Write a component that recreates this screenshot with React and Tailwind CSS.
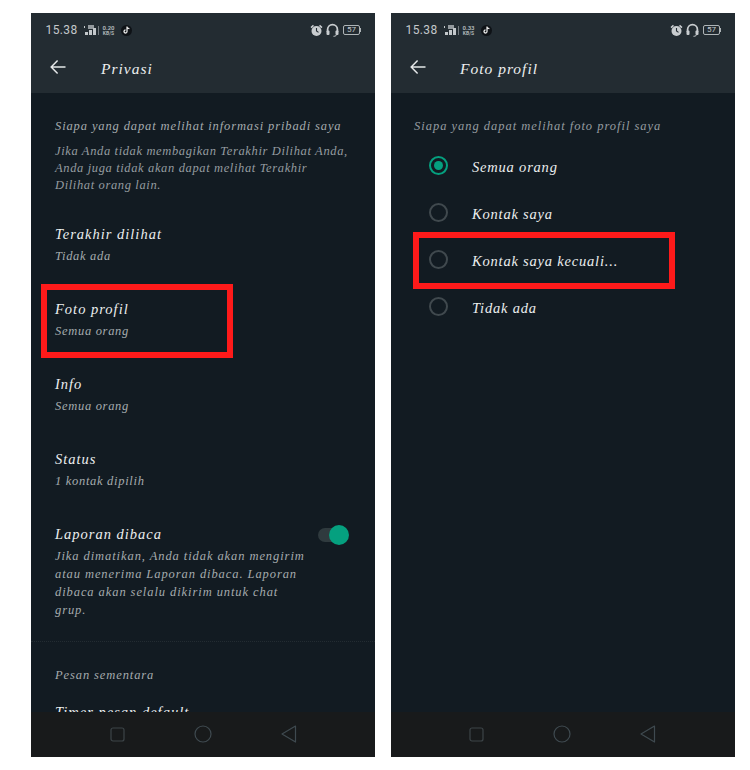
const font = { fontFamily: '"Liberation Serif", serif' };

function StatusBar({ speed }) {
  return (
    <div className="h-[34px] pl-[14px] pr-[14px] flex items-center justify-between">
      <div className="flex items-center">
        <span className="text-[12px] leading-none text-[#c3c8cb] tracking-[0.4px] w-[33px] ml-[0.5px]" style={{ fontFamily: 'Roboto, sans-serif' }}>15.38</span>
        <div className="ml-[5px] flex flex-col items-start w-[15px]">
          <svg width="16" height="12" viewBox="0 0 16 12" fill="#c3c8cb">
            <rect x="0" y="2" width="1" height="2" />
            <rect x="4" y="1" width="6" height="4" opacity="0.7" />
            <rect x="1" y="8" width="3" height="3" />
            <rect x="5" y="6" width="3" height="5" />
            <rect x="9" y="4" width="3" height="7" />
            <rect x="14" y="2" width="1" height="9" opacity="0.5" />
          </svg>
        </div>
        <div className="ml-[3px] flex flex-col items-center text-[6px] leading-[6px] text-[#aeb4b7] font-bold w-[14px]" style={{ fontFamily: 'Roboto, sans-serif' }}>
          <span>{speed}</span>
          <span className="text-[5px] leading-[5px]">KB/S</span>
        </div>
        <div className="ml-[5px] w-[11px] h-[11px] rounded-full bg-[#0e1216] flex items-center justify-center">
          <svg width="7" height="8" viewBox="0 0 7 8" fill="none" stroke="#e8e8e8" strokeWidth="1.3">
            <path d="M4 0.5 V5.5 A1.5 1.5 0 1 1 2.5 4 M4 1 C4.4 2 5.2 2.6 6.4 2.7" />
          </svg>
        </div>
      </div>
      <div className="flex items-center gap-[3px]">
        <svg width="13" height="13" viewBox="0 0 13 13" fill="#c8cccf">
          <circle cx="6.5" cy="7" r="5" />
          <path d="M0.5 3 L3 0.8 L4 2 L1.6 4.2 Z M12.5 3 L10 0.8 L9 2 L11.4 4.2 Z" />
          <path d="M6.5 4 V7 L8.5 8.4" stroke="#232c32" strokeWidth="1.1" fill="none" />
        </svg>
        <svg width="13" height="14" viewBox="0 0 13 14" fill="none" stroke="#c8cccf" strokeWidth="1.8">
          <path d="M1.6 9 V6.5 A4.9 4.9 0 0 1 11.4 6.5 V9" />
          <rect x="0.5" y="7.5" width="3" height="4.5" rx="1" fill="#c8cccf" stroke="none" />
          <rect x="9.5" y="7.5" width="3" height="4.5" rx="1" fill="#c8cccf" stroke="none" />
          <path d="M10.5 12 C10 13 8.5 13.3 7.5 13.3" strokeWidth="1" />
        </svg>
        <div className="flex items-center ml-[1px]">
          <div className="w-[17px] h-[10px] border border-[#aeb4b7] rounded-[2px] flex items-center justify-center text-[8px] leading-none text-[#c3c8cb]" style={{ fontFamily: 'Roboto, sans-serif' }}>57</div>
          <div className="w-[1px] h-[4px] bg-[#aeb4b7]" />
        </div>
      </div>
    </div>
  );
}

function Header({ title, titleX }) {
  return (
    <div className="bg-[#232c32] h-[80px] shrink-0 flex flex-col">
      <StatusBar speed={title === 'Privasi' ? '0.20' : '0.33'} />
      <div className="flex items-center h-[38px] pl-[19px]">
        <svg className="mt-[2px]" width="16" height="16" viewBox="0 0 16 16" fill="none" stroke="#e4e7e8" strokeWidth="1.5">
          <path d="M15.5 8 H1.2 M7.6 1.5 L1.2 8 L7.6 14.5" />
        </svg>
        <span className={`mt-[6px] text-[15.5px] leading-[20px] italic text-[#eceeef] tracking-[1px] ${titleX}`} style={font}>{title}</span>
      </div>
    </div>
  );
}

function NavBar({ pad }) {
  return (
    <div className={`absolute bottom-0 left-0 right-0 h-[45px] bg-[#181a1b] flex items-center gap-[69px] pb-[1px] ${pad}`}>
      <svg width="15" height="15" viewBox="0 0 15 15" fill="none" stroke="#3c4448" strokeWidth="1.2"><rect x="1" y="1" width="13" height="13" rx="2" /></svg>
      <svg width="18" height="18" viewBox="0 0 18 18" fill="none" stroke="#3f4a50" strokeWidth="1.2"><circle cx="9" cy="9" r="8" /></svg>
      <svg width="16" height="18" viewBox="0 0 16 18" fill="none" stroke="#3f4a50" strokeWidth="1.2"><path d="M14.5 1 L1 9 L14.5 17 Z" strokeLinejoin="round" /></svg>
    </div>
  );
}

function Row({ title, sub, pt }) {
  return (
    <div className={pt}>
      <div className="text-[14.5px] leading-[20px] italic text-[#eceeef] tracking-[1px]" style={font}>{title}</div>
      <div className="text-[12.5px] leading-[18px] mt-[3px] italic text-[#a5abae] tracking-[0.7px]" style={font}>{sub}</div>
    </div>
  );
}

function Radio({ label, checked }) {
  return (
    <div className="flex items-center h-[47px] pl-[38px]">
      <div className={`w-[19px] h-[19px] rounded-full border-2 flex items-center justify-center ${checked ? 'border-[#05a07f]' : 'border-[#40494e]'}`}>
        {checked && <div className="w-[9px] h-[9px] rounded-full bg-[#05a07f]" />}
      </div>
      <span className="ml-[24px] mt-[3px] text-[14.5px] leading-[20px] italic text-[#eceeef] tracking-[0.8px]" style={font}>{label}</span>
    </div>
  );
}

export default function App() {
  return (
    <div className="w-[750px] h-[770px] bg-white pt-[13px] pl-[31px] flex gap-[16px]">
      <div className="relative w-[344px] h-[744px] bg-[#121b22] overflow-hidden flex flex-col">
        <Header title="Privasi" titleX="ml-[35px]" />
        <div className="pl-[24px] pr-[22px] pt-[24px]">
          <div className="text-[12.5px] leading-[18px] italic text-[#a5abae] tracking-[0.88px] whitespace-nowrap" style={font}>Siapa yang dapat melihat informasi pribadi saya</div>
          <div className="mt-[8px] text-[12.5px] leading-[17px] italic text-[#959ca0] tracking-[0.63px] whitespace-nowrap" style={font}>
            <div>Jika Anda tidak membagikan Terakhir Dilihat Anda,</div>
            <div>Anda juga tidak akan dapat melihat Terakhir</div>
            <div>Dilihat orang lain.</div>
          </div>
          <Row title="Terakhir dilihat" sub="Tidak ada" pt="pt-[30px]" />
          <Row title="Foto profil" sub="Semua orang" pt="pt-[34px]" />
          <Row title="Info" sub="Semua orang" pt="pt-[34px]" />
          <Row title="Status" sub="1 kontak dipilih" pt="pt-[34px]" />
          <div className="pt-[34px] flex items-start justify-between">
            <div>
              <div className="text-[14.5px] leading-[20px] italic text-[#eceeef] tracking-[1px]" style={font}>Laporan dibaca</div>
              <div className="mt-[3px] text-[12.5px] leading-[18px] italic text-[#a5abae] tracking-[0.92px] whitespace-nowrap" style={font}>
                <div>Jika dimatikan, Anda tidak akan mengirim</div>
                <div>atau menerima Laporan dibaca. Laporan</div>
                <div>dibaca akan selalu dikirim untuk chat</div>
                <div>grup.</div>
              </div>
            </div>
            <div className="relative w-[31px] h-[20px] mt-[1px] mr-[4px] flex items-center">
              <div className="w-[28px] h-[14px] rounded-full bg-[#2f3a3e]" />
              <div className="absolute right-0 top-[0px] w-[20px] h-[20px] rounded-full bg-[#05a07f]" />
            </div>
          </div>
        </div>
        <div className="mt-[22px] border-t border-dotted border-[#232c32]" />
        <div className="pl-[24px] pr-[22px] pt-[24px]">
          <div className="text-[12.5px] leading-[18px] italic text-[#a5abae] tracking-[0.9px]" style={font}>Pesan sementara</div>
          <div className="mt-[18px] text-[14.5px] leading-[20px] italic text-[#eceeef] tracking-[1px]" style={font}>Timer pesan default</div>
        </div>
        <NavBar pad="pl-[79px]" />
        <div className="absolute left-[10px] top-[271px] w-[192px] h-[74px] border-[6px] border-[#fe1a1a]" />
      </div>
      <div className="relative w-[344px] h-[744px] bg-[#121b22] overflow-hidden flex flex-col">
        <Header title="Foto profil" titleX="ml-[34px]" />
        <div className="px-[23px] pt-[24px]">
          <div className="text-[12.5px] leading-[18px] italic text-[#959ca0] tracking-[0.98px]" style={font}>Siapa yang dapat melihat foto profil saya</div>
        </div>
        <div className="pt-[7px]">
          <Radio label="Semua orang" checked />
          <Radio label="Kontak saya" />
          <Radio label="Kontak saya kecuali..." />
          <Radio label="Tidak ada" />
        </div>
        <NavBar pad="pl-[78px]" />
        <div className="absolute left-[22px] top-[219px] w-[262px] h-[57px] border-[6px] border-[#fe1a1a]" />
      </div>
    </div>
  );
}
